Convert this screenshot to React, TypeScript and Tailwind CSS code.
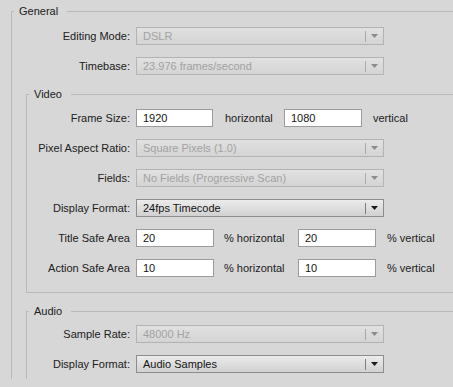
const Arrow = ({ disabled }: { disabled?: boolean }) => (
  <svg width="7" height="4" viewBox="0 0 7 4">
    <path d="M0 0H7L3.5 4Z" fill={disabled ? '#8a8a8a' : '#1a1a1a'} />
  </svg>
);

const Select = ({ value, disabled }: { value: string; disabled?: boolean }) => (
  <div
    className={
      disabled
        ? 'flex h-[18px] w-[248px] items-center border border-[#b3b3b3] bg-linear-to-b from-[#e1e1e1] to-[#d4d4d4] text-[#a2a2a2]'
        : 'flex h-[18px] w-[248px] items-center border border-[#8c8c8c] bg-linear-to-b from-[#ececec] to-[#d1d1d1] text-[#141414]'
    }
  >
    <span className="flex-1 truncate pl-[6px] leading-[16px]">{value}</span>
    <span className={disabled ? 'h-[11px] w-px bg-[#a9a9a9]' : 'h-[11px] w-px bg-[#7d7d7d]'} />
    <span className="flex w-[17px] justify-center">
      <Arrow disabled={disabled} />
    </span>
  </div>
);

const Input = ({ value, w }: { value: string; w: string }) => (
  <div className={`h-[18px] ${w} border border-[#9b9b9b] bg-white pl-[6px] leading-[16px] text-[#141414]`}>
    {value}
  </div>
);

const Row = ({ label, lw, children }: { label: string; lw: string; children: React.ReactNode }) => (
  <div className="flex h-[30px] items-center">
    <span className={`${lw} text-right`}>{label}</span>
    <div className="ml-[6px] flex items-center">{children}</div>
  </div>
);

export default function App() {
  const video = 'w-[103px]';
  const general = 'w-[118px]';
  return (
    <div className="h-[387px] w-[453px] overflow-hidden bg-[#d7d7d7] font-['Liberation_Sans',Arial,sans-serif] text-[11px] text-[#202020]">
      <fieldset className="ml-[11px] mt-[4px] w-[500px] border-l border-t border-[#b9b9b9]">
        <legend className="ml-[2px] pl-[5px] pr-[9px] leading-[15px]">General</legend>

        <div className="pt-[2px]">
          <Row label="Editing Mode:" lw={general}>
            <Select value="DSLR" disabled />
          </Row>
          <Row label="Timebase:" lw={general}>
            <Select value="23.976 frames/second" disabled />
          </Row>
        </div>

        {/* Video */}
        <fieldset className="ml-[14px] mt-[6px] border-b border-l border-t border-[#b9b9b9] pb-[9px]">
          <legend className="ml-[2px] pl-[5px] pr-[9px] leading-[15px]">Video</legend>
          <div className="pt-[1px]">
            <Row label="Frame Size:" lw={video}>
              <Input value="1920" w="w-[77px]" />
              <span className="w-[71px] pl-[12px]">horizontal</span>
              <Input value="1080" w="w-[78px]" />
              <span className="pl-[11px]">vertical</span>
            </Row>
            <Row label="Pixel Aspect Ratio:" lw={video}>
              <Select value="Square Pixels (1.0)" disabled />
            </Row>
            <Row label="Fields:" lw={video}>
              <Select value="No Fields (Progressive Scan)" disabled />
            </Row>
            <Row label="Display Format:" lw={video}>
              <Select value="24fps Timecode" />
            </Row>
            <Row label="Title Safe Area" lw={video}>
              <Input value="20" w="w-[78px]" />
              <span className="w-[84px] pl-[10px]">% horizontal</span>
              <Input value="20" w="w-[78px]" />
              <span className="pl-[11px]">% vertical</span>
            </Row>
            <Row label="Action Safe Area" lw={video}>
              <Input value="10" w="w-[78px]" />
              <span className="w-[84px] pl-[10px]">% horizontal</span>
              <Input value="10" w="w-[78px]" />
              <span className="pl-[11px]">% vertical</span>
            </Row>
          </div>
        </fieldset>

        {/* Audio */}
        <fieldset className="ml-[14px] mt-[11px] border-l border-t border-[#b9b9b9]">
          <legend className="ml-[2px] pl-[5px] pr-[9px] leading-[15px]">Audio</legend>
          <Row label="Sample Rate:" lw={video}>
            <Select value="48000 Hz" disabled />
          </Row>
          <Row label="Display Format:" lw={video}>
            <Select value="Audio Samples" />
          </Row>
        </fieldset>
      </fieldset>
    </div>
  );
}
